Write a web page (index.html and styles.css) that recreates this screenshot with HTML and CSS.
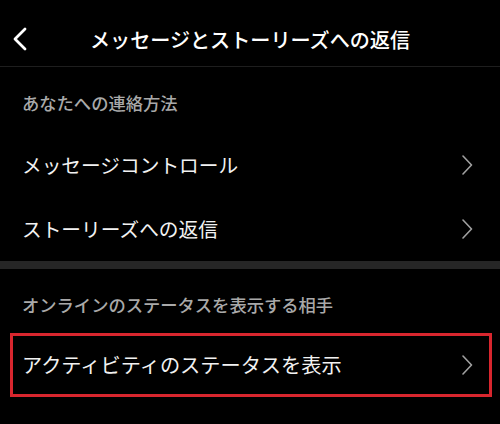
FILE: index.html
```html
<!DOCTYPE html>
<html lang="ja">
<head>
<meta charset="utf-8">
<link rel="stylesheet" href="styles.css">
</head>
<body>
<div class="screen">
  <header class="topbar">
    <svg class="back" width="18" height="24" viewBox="0 0 18 24"><polyline points="14,2 4,12 14,22" fill="none" stroke="#fff" stroke-width="2.8" stroke-linecap="round" stroke-linejoin="round"/></svg>
    <h1 class="title">メッセージとストーリーズへの返信</h1>
  </header>
  <div class="section-title first">あなたへの連絡方法</div>
  <div class="row">
    <span class="label">メッセージコントロール</span>
    <svg class="chev" width="12" height="20" viewBox="0 0 12 20"><polyline points="2,1 10.5,10 2,19" fill="none" stroke="#a0a0a0" stroke-width="1.6" stroke-linecap="round" stroke-linejoin="round"/></svg>
  </div>
  <div class="row">
    <span class="label">ストーリーズへの返信</span>
    <svg class="chev" width="12" height="20" viewBox="0 0 12 20"><polyline points="2,1 10.5,10 2,19" fill="none" stroke="#a0a0a0" stroke-width="1.6" stroke-linecap="round" stroke-linejoin="round"/></svg>
  </div>
  <div class="separator"></div>
  <div class="section-title second">オンラインのステータスを表示する相手</div>
  <div class="row boxed">
    <span class="label">アクティビティのステータスを表示</span>
    <svg class="chev" width="12" height="20" viewBox="0 0 12 20"><polyline points="2,1 10.5,10 2,19" fill="none" stroke="#a0a0a0" stroke-width="1.6" stroke-linecap="round" stroke-linejoin="round"/></svg>
  </div>
</div>
</body>
</html>
```
FILE: styles.css
```css
html, body {
  margin: 0;
  padding: 0;
  background: #000;
}
body {
  width: 500px;
  height: 424px;
  overflow: hidden;
  font-family: "Noto Sans CJK JP", "Noto Sans", sans-serif;
  color: #f2f2f2;
}
.screen {
  display: flex;
  flex-direction: column;
}
.topbar {
  position: relative;
  height: 66px;
  border-bottom: 1px solid #1e1e1e;
  display: flex;
  align-items: center;
  justify-content: center;
}
.back {
  position: absolute;
  left: 11px;
  top: 27px;
}
.title {
  margin: 0;
  font-size: 20.1px;
  font-weight: 500;
  line-height: 28px;
  color: #fff;
  margin-top: 13px;
  margin-bottom: 0;
}
.section-title {
  font-size: 17.3px;
  font-weight: 500;
  color: #a9a9a9;
  line-height: 24px;
  padding-left: 22px;
}
.section-title.first {
  padding-top: 24px;
  padding-bottom: 18px;
}
.section-title.second {
  padding-top: 24px;
  padding-bottom: 16px;
}
.row {
  height: 64px;
  display: flex;
  align-items: center;
  justify-content: space-between;
  padding: 0 27px 0 22px;
}
.label {
  font-size: 19.7px;
  line-height: 24px;
  color: #f2f2f2;
}
.chev {
  display: block;
}
.separator {
  height: 8px;
  background: #262626;
}
.row.boxed {
  height: 58px;
  margin: 0 8px 0 10px;
  padding: 0 16px 0 9px;
  border: 3.5px solid #d8262e;
}
.row.boxed .label {
  font-size: 20.2px;
}
```
